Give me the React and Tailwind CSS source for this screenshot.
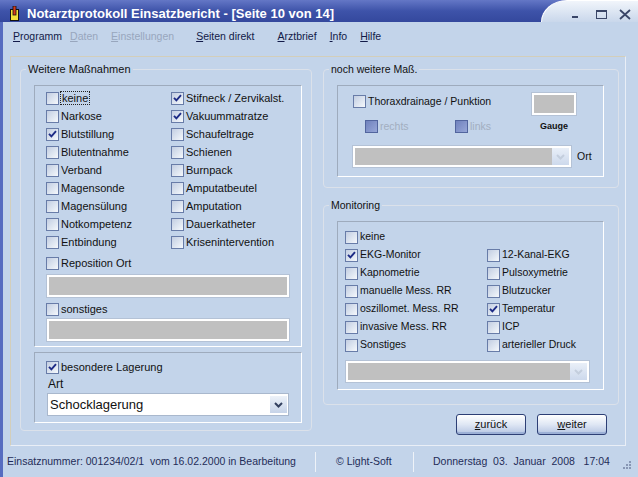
import React from "react";

function Check() {
  return (
    <svg width="9" height="8" viewBox="0 0 9 8" className="block">
      <path d="M1 3.8 L3.4 6.3 L8 1.2" fill="none" stroke="#1d2b86" strokeWidth="1.9" />
    </svg>
  );
}

function Box({ checked, disabled }) {
  if (disabled)
    return <span className="w-[13px] h-[13px] shrink-0 border border-[#52659e] bg-gradient-to-br from-[#7082bd] to-[#97a7d8]" />;
  return (
    <span className="w-[13px] h-[13px] shrink-0 border border-[#687ca8] bg-gradient-to-br from-[#c3cee2] via-[#dbe3ef] to-[#f5f8fc] flex items-center justify-center">
      {checked ? <Check /> : null}
    </span>
  );
}

function Item({ label, checked, focus }) {
  return (
    <div className="h-[18px] flex items-center whitespace-nowrap">
      <Box checked={checked} />
      {focus ? (
        <span className="ml-[1px] border border-dotted border-[#222] leading-[12px] px-[1px]">{label}</span>
      ) : (
        <span className="ml-[2px]">{label}</span>
      )}
    </div>
  );
}

function Chevron({ color }) {
  return (
    <svg width="9" height="6" viewBox="0 0 9 6" className="block">
      <path d="M1 1 L4.5 4.5 L8 1" fill="none" stroke={color} strokeWidth="2" />
    </svg>
  );
}

function GrayCombo({ w }) {
  return (
    <div className={`${w} h-[21px] border-2 border-white bg-white flex shadow-[0_0_0_1px_#b4c2d6]`}>
      <div className="flex-1 bg-[#c0c0c0]" />
      <div className="w-[17px] bg-gradient-to-b from-[#e9eff8] to-[#cdd9ec] flex items-center justify-center">
        <Chevron color="#c4cedd" />
      </div>
    </div>
  );
}

const leftItems = [
  ["keine", false, true],
  ["Stifneck / Zervikalst.", true],
  ["Narkose"],
  ["Vakuummatratze", true],
  ["Blutstillung", true],
  ["Schaufeltrage"],
  ["Blutentnahme"],
  ["Schienen"],
  ["Verband"],
  ["Burnpack"],
  ["Magensonde"],
  ["Amputatbeutel"],
  ["Magensülung"],
  ["Amputation"],
  ["Notkompetenz"],
  ["Dauerkatheter"],
  ["Entbindung"],
  ["Krisenintervention"],
];

const monItems = [
  ["keine"],
  null,
  ["EKG-Monitor", true],
  ["12-Kanal-EKG"],
  ["Kapnometrie"],
  ["Pulsoxymetrie"],
  ["manuelle Mess. RR"],
  ["Blutzucker"],
  ["oszillomet. Mess. RR"],
  ["Temperatur", true],
  ["invasive Mess. RR"],
  ["ICP"],
  ["Sonstiges"],
  ["arterieller Druck"],
];

const sunken = "border border-t-[#9eabbd] border-l-[#9eabbd] border-b-white border-r-white";
const fieldset = "border border-[#dbe1ea] rounded-[4px] pl-[5px]";

export default function App() {
  return (
    <div className="w-[638px] h-[477px] bg-[#c3d4ea] flex flex-col overflow-hidden font-['Liberation_Sans',Arial,sans-serif] text-[11px] text-[#111]">
      {/* Title bar */}
      <div className="h-[22px] shrink-0 flex bg-gradient-to-b from-[#6477c6] via-[#3e53a9] to-[#34489d]">
        <div className="flex-1 flex items-center pl-[10px] pt-[4px]">
          <svg width="9" height="15" viewBox="0 0 9 15" className="block">
            <rect x="0.5" y="3.5" width="8" height="11" fill="#f3e03a" stroke="#111" />
            <rect x="3" y="0" width="3" height="9" fill="#d83a1c" stroke="#111" strokeWidth="0.8" />
          </svg>
          <span className="ml-[8px] text-white font-bold text-[13px] leading-none whitespace-nowrap">
            Notarztprotokoll Einsatzbericht - [Seite 10 von 14]
          </span>
        </div>
        <div className="w-[97px] rounded-tl-[26px_22px] border-t border-l border-white bg-gradient-to-b from-[#f1f5fb] to-[#c9d7eb] flex items-center">
          <span className="ml-[30px] mt-[11px] w-[6px] h-[2px] bg-[#3a4668]" />
          <span className="ml-[18px] mt-[6px] w-[11px] h-[9px] border border-t-2 border-[#3a4668]" />
          <svg width="12" height="11" viewBox="0 0 12 11" className="ml-[12px] mt-[6px] block">
            <path d="M1 1 L11 10 M11 1 L1 10" stroke="#3a4668" strokeWidth="1.8" />
          </svg>
        </div>
      </div>

      <div className="flex-1 flex">
        <div className="w-[3px] bg-[#566cc0]" />
        <div className="flex-1 flex flex-col">
          {/* Menu */}
          <div className="h-[30px] flex items-center pl-[10px] text-[10.5px] text-[#121a48] whitespace-nowrap">
            <span><span className="underline">P</span>rogramm</span>
            <span className="ml-[8px] text-[#98a6bd]"><span className="underline">D</span>aten</span>
            <span className="ml-[13px] text-[#98a6bd]"><span className="underline">E</span>instellungen</span>
            <span className="ml-[22px]"><span className="underline">S</span>eiten direkt</span>
            <span className="ml-[23px]"><span className="underline">A</span>rztbrief</span>
            <span className="ml-[13px]"><span className="underline">I</span>nfo</span>
            <span className="ml-[13px]"><span className="underline">H</span>ilfe</span>
          </div>

          {/* Main panel */}
          <div className="ml-[7px] mt-[4px] w-[616px] h-[390px] border border-t-[#d3ceba] border-l-[#d3ceba] border-r-[#e9eef6] border-b-[#e9eef6] flex pl-[9px] pt-[6px] gap-[11px]">
            {/* Left fieldset */}
            <fieldset className={`${fieldset} w-[292px] h-[368px]`}>
              <legend className="px-[2px] leading-[13px]">Weitere Maßnahmen</legend>
              <div className={`${sunken} ml-[8px] mt-[9px] w-[268px] h-[262px] pt-[3px] pl-[11px]`}>
                <div className="grid grid-cols-[125px_1fr]">
                  {leftItems.map((it, i) => (
                    <Item key={i} label={it[0]} checked={it[1]} focus={it[2]} />
                  ))}
                </div>
                <div className="mt-[3px]">
                  <Item label="Reposition Ort" />
                </div>
                <div className="mt-[3px] ml-[1px] w-[242px] h-[22px] border-2 border-white bg-[#c0c0c0] shadow-[0_0_0_1px_#b4c2d6]" />
                <div className="mt-[3px]">
                  <Item label="sonstiges" />
                </div>
                <div className="mt-[1px] ml-[1px] w-[242px] h-[22px] border-2 border-white bg-[#c0c0c0] shadow-[0_0_0_1px_#b4c2d6]" />
              </div>
              <div className={`${sunken} ml-[8px] mt-[5px] w-[268px] h-[71px] pt-[5px] pl-[11px]`}>
                <Item label="besondere Lagerung" checked />
                <div className="mt-[1px] ml-[2px] h-[14px] leading-[14px] text-[12px]">Art</div>
                <div className="mt-[2px] ml-[1px] w-[242px] h-[23px] border border-[#a9b8cd] bg-white flex items-center">
                  <span className="flex-1 pl-[2px] text-[13px] leading-none">Schocklagerung</span>
                  <span className="w-[17px] h-[17px] mr-[1px] bg-gradient-to-b from-[#edf2f9] to-[#c6d3e8] flex items-center justify-center">
                    <Chevron color="#33405f" />
                  </span>
                </div>
              </div>
            </fieldset>

            {/* Right column */}
            <div className="w-[296px] flex flex-col text-[10.5px]">
              <fieldset className={`${fieldset} h-[125px]`}>
                <legend className="px-[2px] leading-[13px]">noch weitere Maß.</legend>
                <div className={`${sunken} ml-[8px] mt-[9px] w-[267px] h-[92px] pt-[7px] pl-[15px]`}>
                  <div className="flex pr-[27px]">
                    <div className="flex-1">
                      <div className="h-[17px] flex items-center">
                        <Box />
                        <span className="ml-[2px]">Thoraxdrainage / Punktion</span>
                      </div>
                      <div className="mt-[8px] h-[17px] flex items-center pl-[12px] text-[#a2aec0]">
                        <div className="w-[90px] flex items-center">
                          <Box disabled />
                          <span className="ml-[2px]">rechts</span>
                        </div>
                        <div className="flex items-center">
                          <Box disabled />
                          <span className="ml-[2px]">links</span>
                        </div>
                      </div>
                    </div>
                    <div className="w-[44px] flex flex-col items-center">
                      <div className="w-[44px] h-[22px] border-2 border-white bg-[#c0c0c0] shadow-[0_0_0_1px_#b4c2d6]" />
                      <div className="mt-[5px] text-[9px] font-bold leading-[12px]">Gauge</div>
                    </div>
                  </div>
                  <div className="mt-[11px] flex items-center">
                    <GrayCombo w="w-[218px]" />
                    <span className="ml-[6px]">Ort</span>
                  </div>
                </div>
              </fieldset>

              <fieldset className={`${fieldset} mt-[11px] h-[206px]`}>
                <legend className="px-[2px] leading-[13px]">Monitoring</legend>
                <div className={`${sunken} ml-[8px] mt-[9px] w-[267px] h-[169px] pt-[6px] pl-[7px]`}>
                  <div className="grid grid-cols-[142px_1fr]">
                    {monItems.map((it, i) =>
                      it ? <Item key={i} label={it[0]} checked={it[1]} /> : <div key={i} />
                    )}
                  </div>
                  <div className="mt-[7px] ml-[1px]">
                    <GrayCombo w="w-[243px]" />
                  </div>
                </div>
              </fieldset>

              <div className="mt-[9px] flex justify-end pr-[12px] gap-[11px] text-[11px]">
                <button className="w-[70px] h-[21px] rounded-[3px] border border-[#2d3f75] bg-gradient-to-b from-white via-[#dfe7f4] to-[#b5c5e2] shadow-[inset_0_-2px_0_#9cb0d6] text-[#111]">
                  <span className="underline">z</span>urück
                </button>
                <button className="w-[70px] h-[21px] rounded-[3px] border border-[#2d3f75] bg-gradient-to-b from-white via-[#dfe7f4] to-[#b5c5e2] shadow-[inset_0_-2px_0_#9cb0d6] text-[#111]">
                  <span className="underline">w</span>eiter
                </button>
              </div>
            </div>
          </div>

          {/* Status bar */}
          <div className="flex-1 flex items-center text-[10.5px] text-[#1f2c58] whitespace-pre">
            <div className="w-[312px] pl-[4px]">Einsatznummer: 001234/02/1  vom 16.02.2000 in Bearbeitung</div>
            <div className="w-px h-[20px] bg-[#eef2f8]" />
            <div className="w-[97px] pl-[20px]">© Light-Soft</div>
            <div className="w-px h-[20px] bg-[#eef2f8]" />
            <div className="flex-1 pl-[19px]">Donnerstag  03.  Januar  2008   17:04</div>
            <svg width="10" height="10" viewBox="0 0 10 10" className="mr-[6px] mt-[6px] block">
              <rect x="7" y="1" width="2" height="2" fill="#8796b4" />
              <rect x="4" y="4" width="2" height="2" fill="#8796b4" />
              <rect x="7" y="4" width="2" height="2" fill="#8796b4" />
              <rect x="1" y="7" width="2" height="2" fill="#8796b4" />
              <rect x="4" y="7" width="2" height="2" fill="#8796b4" />
              <rect x="7" y="7" width="2" height="2" fill="#8796b4" />
            </svg>
          </div>
        </div>
      </div>
    </div>
  );
}
